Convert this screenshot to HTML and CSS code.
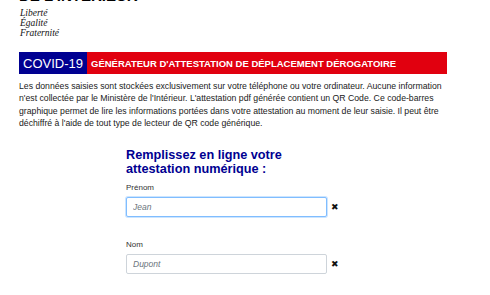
FILE: index.html
```html
<!DOCTYPE html>
<html lang="fr">
<head>
<meta charset="utf-8">
<link rel="stylesheet" href="styles.css">
</head>
<body>
<div class="page">
  <header class="logo">
    <div class="ministry">DE L'INTÉRIEUR</div>
    <div class="motto">Liberté<br>Égalité<br>Fraternité</div>
  </header>
  <div class="banner">
    <span class="covid">COVID-19</span>
    <span class="title">GÉNÉRATEUR D'ATTESTATION DE DÉPLACEMENT DÉROGATOIRE</span>
  </div>
  <p class="intro">Les données saisies sont stockées exclusivement sur votre téléphone ou votre ordinateur. Aucune information n'est collectée par le Ministère de l'Intérieur. L'attestation pdf générée contient un QR Code. Ce code-barres graphique permet de lire les informations portées dans votre attestation au moment de leur saisie. Il peut être déchiffré à l'aide de tout type de lecteur de QR code générique.</p>
  <form class="form">
    <h2 class="form-title">Remplissez en ligne votre attestation numérique :</h2>
    <div class="field">
      <label class="label" for="prenom">Prénom</label>
      <div class="row">
        <input class="input focus" id="prenom" placeholder="Jean">
        <span class="clear">&#x2716;</span>
      </div>
    </div>
    <div class="field">
      <label class="label" for="nom">Nom</label>
      <div class="row">
        <input class="input" id="nom" placeholder="Dupont">
        <span class="clear">&#x2716;</span>
      </div>
    </div>
  </form>
</div>
</body>
</html>
```

FILE: styles.css
```css
html, body { margin: 0; padding: 0; background: #fff; }
body { font-family: "Liberation Sans", Arial, sans-serif; color: #212529; }
.page { width: 428px; padding-left: 19px; }
.logo { height: 52px; display: flow-root; }
.ministry { font-weight: bold; font-size: 15px; line-height: 15px; margin-top: -12px; height: 15px; color: #000; }
.motto { font-family: "Liberation Serif", "Times New Roman", serif; font-style: italic; font-size: 9.5px; line-height: 10px; margin-top: 5px; padding-left: 1px; color: #111; }
.banner { display: flex; height: 22px; background: #e1000f; }
.covid { background: #000091; color: #fff; font-size: 13px; width: 68px; display: flex; align-items: center; justify-content: center; }
.title { color: #fff; font-weight: bold; font-size: 9.5px; display: flex; align-items: center; padding-left: 4px; }
.intro { font-size: 8.7px; line-height: 12.4px; margin: 6px 0 0; width: 428px; color: #1a1a1a; }
.form { margin-left: 107px; width: 230px; margin-top: 18px; }
.form-title { color: #000091; font-size: 12.7px; line-height: 14px; font-weight: bold; margin: 0; width: 200px; }
.field { margin-top: 7px; }
.field + .field { margin-top: 23px; }
.label { display: block; font-size: 8px; line-height: 10px; color: #333; margin-bottom: 4px; }
.row { display: flex; align-items: center; }
.input { width: 201px; height: 20px; box-sizing: border-box; border: 1px solid #ced4da; border-radius: 2px; font-family: "Liberation Sans", Arial, sans-serif; font-size: 8.5px; padding: 0 6px; margin: 0; outline: none; }
.input.focus { border-color: #80bdff; box-shadow: 0 0 0 1px rgba(0,123,255,0.2); }
.input::placeholder { color: #6c757d; font-style: italic; }
.clear { font-size: 8.5px; margin-left: 4px; color: #111; }
```
